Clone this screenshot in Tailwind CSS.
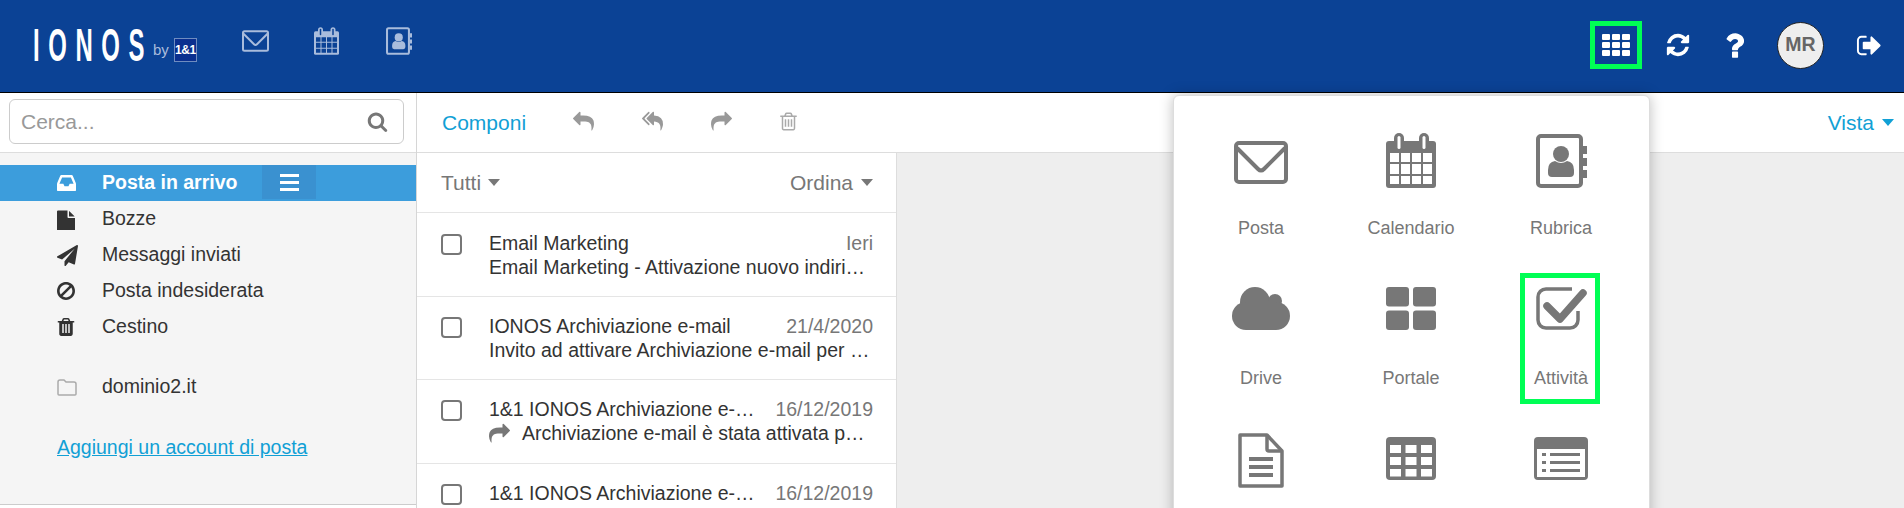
<!DOCTYPE html>
<html lang="it">
<head>
    <meta charset="utf-8">
    <title>Webmail</title>
    <script src="https://cdn.jsdelivr.net/npm/@tailwindcss/browser@4"></script>
</head>
<body class="bg-white font-['Liberation_Sans',Arial,sans-serif] text-[#333] overflow-hidden">
    <!-- icone -->
    <svg class="hidden">
        <symbol id="fa-reply" viewBox="0 0 1792 1792"><path d="M1792 1120q0 166-127 451-3 7-10.5 24t-13.5 30-13 22q-12 17-28 17-15 0-23.5-10t-8.5-25q0-9 2.5-26.5t2.5-23.5q5-68 5-123 0-101-17.5-181t-48.5-138.5-80-101-105.5-69.5-133-42.5-154-21.5-175.5-6h-224v256q0 26-19 45t-45 19-45-19l-512-512q-19-19-19-45t19-45l512-512q19-19 45-19t45 19 19 45v256h224q713 0 875 403 53 134 53 333z"/></symbol>
        <symbol id="fa-reply-all" viewBox="0 0 1792 1792"><path d="M640 1082v70q0 42-39 59-13 5-25 5-27 0-45-19l-512-512q-19-19-19-45t19-45l512-512q29-31 70-14 39 17 39 59v69l-397 398q-19 19-19 45t19 45zm1152 38q0 58-17 133.5t-38.5 138-48 125-40.5 90.5l-20 40q-8 17-28 17-6 0-9-1-25-8-23-34 43-400-106-565-64-71-170.5-110.5t-267.5-52.5v251q0 42-39 59-13 5-25 5-27 0-45-19l-512-512q-19-19-19-45t19-45l512-512q29-31 70-14 39 17 39 59v262q411 28 599 221 169 173 169 509z"/></symbol>
        <symbol id="fa-forward" viewBox="0 0 1792 1792"><g transform="translate(1792 0) scale(-1 1)"><path d="M1792 1120q0 166-127 451-3 7-10.5 24t-13.5 30-13 22q-12 17-28 17-15 0-23.5-10t-8.5-25q0-9 2.5-26.5t2.5-23.5q5-68 5-123 0-101-17.5-181t-48.5-138.5-80-101-105.5-69.5-133-42.5-154-21.5-175.5-6h-224v256q0 26-19 45t-45 19-45-19l-512-512q-19-19-19-45t19-45l512-512q19-19 45-19t45 19 19 45v256h224q713 0 875 403 53 134 53 333z"/></g></symbol>
        <symbol id="fa-trash-o" viewBox="0 0 1792 1792"><path d="M704 736v576q0 14-9 23t-23 9h-64q-14 0-23-9t-9-23v-576q0-14 9-23t23-9h64q14 0 23 9t9 23zm256 0v576q0 14-9 23t-23 9h-64q-14 0-23-9t-9-23v-576q0-14 9-23t23-9h64q14 0 23 9t9 23zm256 0v576q0 14-9 23t-23 9h-64q-14 0-23-9t-9-23v-576q0-14 9-23t23-9h64q14 0 23 9t9 23zm128 724v-948h-896v948q0 22 7 40.5t14.5 27 10.5 8.5h832q3 0 10.5-8.5t14.5-27 7-40.5zm-672-1076h448l-48-117q-7-9-17-11h-317q-10 2-17 11zm928 32v64q0 14-9 23t-23 9h-96v948q0 83-47 143.5t-113 60.5h-832q-66 0-113-58.5t-47-141.5v-952h-96q-14 0-23-9t-9-23v-64q0-14 9-23t23-9h309l70-167q15-37 54-63t79-26h320q40 0 79 26t54 63l70 167h309q14 0 23 9t9 23z"/></symbol>
        <symbol id="fa-trash" viewBox="128 128 1536 1536"><path d="M704 1376v-704q0-14-9-23t-23-9h-64q-14 0-23 9t-9 23v704q0 14 9 23t23 9h64q14 0 23-9t9-23zm256 0v-704q0-14-9-23t-23-9h-64q-14 0-23 9t-9 23v704q0 14 9 23t23 9h64q14 0 23-9t9-23zm256 0v-704q0-14-9-23t-23-9h-64q-14 0-23 9t-9 23v704q0 14 9 23t23 9h64q14 0 23-9t9-23zm-544-992h448l-48-117q-7-9-17-11h-317q-10 2-17 11zm928 32v64q0 14-9 23t-23 9h-96v948q0 83-47 143.5t-113 60.5h-832q-66 0-113-58.5t-47-141.5v-952h-96q-14 0-23-9t-9-23v-64q0-14 9-23t23-9h309l70-167q15-37 54-63t79-26h320q40 0 79 26t54 63l70 167h309q14 0 23 9t9 23z"/></symbol>
        <symbol id="fa-refresh" viewBox="0 0 1792 1792"><path d="M1639 1056q0 5-1 7-64 268-268 434.5t-478 166.5q-146 0-282.5-55t-243.5-157l-129 129q-19 19-45 19t-45-19-19-45v-448q0-26 19-45t45-19h448q26 0 45 19t19 45-19 45l-137 137q71 66 161 102t187 36q134 0 250-65t186-179q11-17 53-117 8-23 30-23h192q13 0 22.5 9.5t9.5 22.5zm25-800v448q0 26-19 45t-45 19h-448q-26 0-45-19t-19-45 19-45l138-138q-148-137-349-137-134 0-250 65t-186 179q-11 17-53 117-8 23-30 23h-199q-13 0-22.5-9.5t-9.5-22.5v-7q65-268 270-434.5t480-166.5q146 0 284 55.5t245 156.5l130-129q19-19 45-19t45 19 19 45z"/></symbol>
        <symbol id="fa-question" viewBox="400 256 1000 1280"><path d="M1088 1256v240q0 16-12 28t-28 12h-240q-16 0-28-12t-12-28v-240q0-16 12-28t28-12h240q16 0 28 12t12 28zm316-600q0 54-15.5 101t-35 76.5-55 59.5-57.5 43.5-61 35.5q-41 23-68.5 65t-27.5 67q0 17-12 32.5t-28 15.5h-240q-15 0-25.5-18.5t-10.5-37.5v-45q0-83 65-156.5t143-108.5q59-27 84-56t25-76q0-42-46.5-74t-107.5-32q-65 0-108 29-35 25-107 115-13 16-31 16-12 0-25-8l-164-125q-13-10-15.5-25t5.5-28q160-266 464-266 80 0 161 31t146 83 106 127.5 41 158.5z"/></symbol>
        <symbol id="fa-sign-out" viewBox="0 0 1792 1792"><path d="M704 1440q0 4 1 20t.5 26.5-3 23.5-10 19.5-20.5 6.5h-320q-119 0-203.5-84.5t-84.5-203.5v-704q0-119 84.5-203.5t203.5-84.5h320q13 0 22.5 9.5t9.5 22.5q0 4 1 20t.5 26.5-3 23.5-10 19.5-20.5 6.5h-320q-66 0-113 47t-47 113v704q0 66 47 113t113 47h312l11.5 1 11.5 3 8 5.5 7 9 2 13.5zm928-544q0 26-19 45l-544 544q-19 19-45 19t-45-19-19-45v-288h-448q-26 0-45-19t-19-45v-384q0-26 19-45t45-19h448v-288q0-26 19-45t45-19 45 19l544 544q19 19 19 45z"/></symbol>
        <symbol id="fa-search" viewBox="0 0 1792 1792"><path d="M1216 832q0-185-131.5-316.5t-316.5-131.5-316.5 131.5-131.5 316.5 131.5 316.5 316.5 131.5 316.5-131.5 131.5-316.5zm512 832q0 52-38 90t-90 38q-54 0-90-38l-343-342q-179 124-399 124-143 0-273.5-55.5t-225-150-150-225-55.5-273.5 55.5-273.5 150-225 225-150 273.5-55.5 273.5 55.5 225 150 150 225 55.5 273.5q0 220-124 399l343 343q37 37 37 90z"/></symbol>
        <symbol id="fa-inbox" viewBox="0 256 1536 1280"><path d="M1023 960h316q-1-3-2.5-8.5t-2.5-7.5l-212-496h-708l-212 496q-1 3-2.5 8.5t-2.5 7.5h316l95 192h320zm513 30v482q0 26-19 45t-45 19h-1408q-26 0-45-19t-19-45v-482q0-62 25-123l238-552q10-25 36.5-42t52.5-17h832q26 0 52.5 17t36.5 42l238 552q25 61 25 123z"/></symbol>
        <symbol id="fa-file" viewBox="128 128 1536 1536"><path d="M1152 512v-472q22 14 36 28l408 408q14 14 28 36h-472zm-128 32q0 40 28 68t68 28h544v1056q0 40-28 68t-68 28h-1344q-40 0-68-28t-28-68v-1600q0-40 28-68t68-28h800v544z" transform="translate(0 128)"/></symbol>
        <symbol id="fa-send" viewBox="0 0 1792 1792"><path d="M1764 11q33 24 27 64l-256 1536q-5 29-32 45-14 8-31 8-11 0-24-5l-453-185-242 295q-18 23-49 23-13 0-22-4-19-7-30.5-23.5t-11.5-36.5v-349l864-1059-1069 925-395-162q-37-14-40-55-2-40 32-59l1664-960q15-9 32-9 20 0 36 11z"/></symbol>
        <symbol id="fa-ban" viewBox="128 128 1536 1536"><path d="M1440 893q0-161-87-295l-754 753q137 89 297 89 111 0 211.5-43.5t173.5-116.5 116-174.5 43-212.5zm-999 299l755-754q-135-91-300-91-148 0-273 73t-198 199-73 274q0 162 89 299zm1223-299q0 157-61 300t-163.5 246-245 164-298.5 61-298.5-61-245-164-163.5-246-61-300 61-299.5 163.5-245.5 245-164 298.5-61 298.5 61 245 164 163.5 245.5 61 299.5z"/></symbol>

        <symbol id="app-mail" viewBox="0 0 54 43"><rect x="2" y="2" width="50" height="39" rx="3" fill="none" stroke="currentColor" stroke-width="4"/><path d="M3 7 L24 28 Q27 31 30 28 L51 7" fill="none" stroke="currentColor" stroke-width="4"/></symbol>
        <symbol id="app-calendar" viewBox="0 0 50 55"><rect y="8" width="50" height="47" rx="3" fill="currentColor"/><rect x="8" width="10" height="16" rx="5" fill="currentColor"/><rect x="33" width="10" height="16" rx="5" fill="currentColor"/><rect x="11.5" y="3" width="3" height="13" rx="1.5" fill="#fff"/><rect x="36.5" y="3" width="3" height="13" rx="1.5" fill="#fff"/><path fill="#fff" d="M4 20h9v9H4zM15 20h9v9h-9zM26 20h9v9h-9zM37 20h9v9h-9zM4 31h9v10H4zM15 31h9v10h-9zM26 31h9v10h-9zM37 31h9v10h-9zM4 43h9v8H4zM15 43h9v8h-9zM26 43h9v8h-9zM37 43h9v8h-9z"/></symbol>
        <symbol id="app-calendar-top" viewBox="0 0 50 55"><rect y="8" width="50" height="47" rx="3" fill="currentColor"/><rect x="8" width="10" height="16" rx="5" fill="currentColor"/><rect x="33" width="10" height="16" rx="5" fill="currentColor"/><rect x="11.5" y="3" width="3" height="13" rx="1.5" fill="#0b4295"/><rect x="36.5" y="3" width="3" height="13" rx="1.5" fill="#0b4295"/><path fill="#0b4295" d="M4 20h9v9H4zM15 20h9v9h-9zM26 20h9v9h-9zM37 20h9v9h-9zM4 31h9v10H4zM15 31h9v10h-9zM26 31h9v10h-9zM37 31h9v10h-9zM4 43h9v8H4zM15 43h9v8h-9zM26 43h9v8h-9zM37 43h9v8h-9z"/></symbol>
        <symbol id="app-contacts" viewBox="0 0 51 54"><rect x="2" y="2" width="43" height="50" rx="3" fill="none" stroke="currentColor" stroke-width="4"/><path fill="currentColor" d="M47 12h4v8h-4zM47 24h4v8h-4zM47 36h4v8h-4z"/><circle cx="25" cy="20" r="8" fill="currentColor"/><path fill="currentColor" d="M19 27 Q25 31 31 27 Q38 28 38 36 V39 Q38 43 34 43 H16 Q12 43 12 39 V36 Q12 28 19 27z"/></symbol>
        <symbol id="app-cloud" viewBox="0 0 58 43"><g fill="currentColor"><circle cx="23" cy="15" r="15"/><circle cx="43" cy="14" r="7"/><circle cx="14" cy="29" r="14"/><circle cx="44" cy="29" r="14"/><rect x="14" y="15" width="30" height="28"/></g></symbol>
        <symbol id="app-portal" viewBox="0 0 50 43"><g fill="currentColor"><rect width="23" height="19.5" rx="3"/><rect x="27" width="23" height="19.5" rx="3"/><rect y="23.5" width="23" height="19.5" rx="3"/><rect x="27" y="23.5" width="23" height="19.5" rx="3"/></g></symbol>
        <symbol id="app-tasks" viewBox="0 0 51 43"><path d="M36 2H10a8 8 0 0 0-8 8V33a8 8 0 0 0 8 8H34a8 8 0 0 0 8-8V24" fill="none" stroke="currentColor" stroke-width="3.5"/><path d="M11 19 L24 32 L47 6" fill="none" stroke="currentColor" stroke-width="7.5" stroke-linejoin="round" stroke-linecap="round"/></symbol>
        <symbol id="app-doc" viewBox="0 0 46 55"><path d="M2 2H29L44 18V53H2Z" fill="none" stroke="currentColor" stroke-width="3.5" stroke-linejoin="round"/><path d="M29 2V16Q29 18 31 18H44" fill="none" stroke="currentColor" stroke-width="3.5"/><path fill="currentColor" d="M11 24h24v4H11zM11 32h24v4H11zM11 40h24v4H11z"/></symbol>
        <symbol id="app-table" viewBox="0 0 50 43"><rect width="50" height="43" rx="4" fill="currentColor"/><path fill="#fff" d="M4 8h11v8H4zM19.500 8h11v8h-11zM35 8h11v8H35zM4 20h11v8H4zM19.500 20h11v8h-11zM35 20h11v8H35zM4 32h11v7.500H4zM19.500 32h11v7.500h-11zM35 32h11v7.500H35z"/></symbol>
        <symbol id="app-form" viewBox="0 0 54 43"><rect width="54" height="43" rx="4" fill="currentColor"/><path fill="#fff" d="M3 12h48v28H3z"/><path fill="currentColor" d="M8 16h4v3H8zM16 16h30v3H16zM8 24h4v3H8zM16 24h30v3H16zM8 32h4v3H8zM16 32h30v3H16z"/></symbol>
    </svg>

    <div class="relative w-[1904px] h-[508px] flex flex-col overflow-hidden">
        <!-- barra superiore -->
        <header class="h-[93px] shrink-0 bg-[#0b4295] border-b border-black flex items-center">
            <div class="w-[33px]"></div>
            <div class="w-[130px] h-[92px] flex items-center overflow-visible">
                <span class="block origin-left scale-x-[0.52] text-white text-[46px] font-bold leading-none tracking-[16.5px] -mt-[3px] whitespace-nowrap">IONOS</span>
            </div>
            <span class="ml-[-10px] mt-[8px] text-[#a9bcdc] text-[15px]">by</span>
            <span class="ml-[5px] mt-[7px] w-[23px] h-[24px] bg-[#0a2f8f] border border-[#6f8cc0] text-white text-[12px] font-bold tracking-[-0.5px] flex items-center justify-center">1&amp;1</span>
            <div class="ml-[45px] flex items-center text-[#a9bcdc] -mt-[10px]">
                <svg class="w-[27px] h-[22px]"><use href="#app-mail"/></svg>
                <svg class="ml-[45px] w-[25px] h-[28px]"><use href="#app-calendar-top"/></svg>
                <svg class="ml-[47px] w-[26px] h-[28px]"><use href="#app-contacts"/></svg>
            </div>
            <div class="ml-auto flex items-center text-white -mt-[2px]">
                <div class="w-[28px] grid grid-cols-3 gap-[2px]">
                    <span class="h-[6px] bg-white rounded-[1px]"></span><span class="h-[6px] bg-white rounded-[1px]"></span><span class="h-[6px] bg-white rounded-[1px]"></span>
                    <span class="h-[6px] bg-white rounded-[1px]"></span><span class="h-[6px] bg-white rounded-[1px]"></span><span class="h-[6px] bg-white rounded-[1px]"></span>
                    <span class="h-[6px] bg-white rounded-[1px]"></span><span class="h-[6px] bg-white rounded-[1px]"></span><span class="h-[6px] bg-white rounded-[1px]"></span>
                </div>
                <svg class="ml-[35px] w-[26px] h-[26px] fill-current"><use href="#fa-refresh"/></svg>
                <svg class="ml-[34px] w-[19px] h-[25px] fill-current"><use href="#fa-question"/></svg>
                <span class="ml-[33px] w-[47px] h-[47px] rounded-full bg-[#eee] border border-[#222] text-[#666] text-[19.5px] font-bold flex items-center justify-center">MR</span>
                <svg class="ml-[32px] mr-[21px] w-[27px] h-[27px] fill-current"><use href="#fa-sign-out"/></svg>
            </div>
        </header>

        <div class="flex flex-1 min-h-0">
            <!-- colonna cartelle -->
            <aside class="w-[417px] shrink-0 border-r border-[#d6d6d6] flex flex-col">
                <div class="h-[60px] shrink-0 border-b border-[#ddd] pl-[9px] pt-[6px] bg-white">
                    <div class="w-[395px] h-[45px] border border-[#ccc] rounded-md flex items-center pl-[11px] pr-[15px]">
                        <input class="flex-1 min-w-0 text-[21px] outline-none placeholder:text-[#999]" placeholder="Cerca...">
                        <svg class="w-[21px] h-[21px] fill-[#777]"><use href="#fa-search"/></svg>
                    </div>
                </div>
                <nav class="flex-1 bg-[#f5f5f5] border-b border-[#ccc] mb-[3px] pt-[12px] text-[19.5px]">
                    <div class="h-[36px] bg-[#3c9ddc] text-white font-bold flex items-center pl-[57px]">
                        <svg class="w-[19px] h-[16px] fill-white shrink-0"><use href="#fa-inbox"/></svg>
                        <span class="ml-[26px] w-[160px] whitespace-nowrap">Posta in arrivo</span>
                        <span class="h-[34px] -mt-[2px] w-[54px] bg-[#3a91d0] flex flex-col justify-center items-center gap-[4px]">
                            <i class="block w-[19px] h-[3px] bg-white"></i><i class="block w-[19px] h-[3px] bg-white"></i><i class="block w-[19px] h-[3px] bg-white"></i>
                        </span>
                    </div>
                    <div class="h-[36px] flex items-center pl-[57px]"><svg class="w-[18px] h-[21px] fill-[#333] shrink-0"><use href="#fa-file"/></svg><span class="ml-[27px]">Bozze</span></div>
                    <div class="h-[36px] flex items-center pl-[57px]"><svg class="w-[21px] h-[21px] fill-[#333] shrink-0"><use href="#fa-send"/></svg><span class="ml-[24px]">Messaggi inviati</span></div>
                    <div class="h-[36px] flex items-center pl-[57px]"><svg class="w-[18px] h-[18px] fill-[#333] shrink-0"><use href="#fa-ban"/></svg><span class="ml-[27px]">Posta indesiderata</span></div>
                    <div class="h-[36px] flex items-center pl-[57px]"><svg class="w-[18px] h-[20px] fill-[#333] shrink-0"><use href="#fa-trash"/></svg><span class="ml-[27px]">Cestino</span></div>
                    <div class="h-[36px] mt-[24px] flex items-center pl-[57px]">
                        <svg class="w-[20px] h-[17px] shrink-0" viewBox="0 0 20 17"><path d="M1 15V3Q1 1 3 1H7L9 3H17Q19 3 19 5V15Q19 16 18 16H2Q1 16 1 15Z" fill="none" stroke="#aaa" stroke-width="1.500"/></svg>
                        <span class="ml-[25px]">dominio2.it</span>
                    </div>
                    <a class="block mt-[28px] ml-[57px] text-[#11a0d5] underline">Aggiungi un account di posta</a>
                </nav>
            </aside>

            <main class="flex-1 min-w-0 flex flex-col">
                <!-- barra azioni -->
                <div class="h-[60px] shrink-0 border-b border-[#ddd] flex items-center pl-[25px] pr-[10px] text-[#11a0d5] text-[21px]">
                    <span class="w-[131px]">Componi</span>
                    <svg class="-mt-[2px] w-[21px] h-[21px] fill-[#999]"><use href="#fa-reply"/></svg>
                    <svg class="-mt-[2px] ml-[48px] w-[21px] h-[21px] fill-[#999]"><use href="#fa-reply-all"/></svg>
                    <svg class="-mt-[2px] ml-[48px] w-[21px] h-[21px] fill-[#999]"><use href="#fa-forward"/></svg>
                    <svg class="-mt-[2px] ml-[46px] w-[21px] h-[21px] fill-[#aaa]"><use href="#fa-trash-o"/></svg>
                    <span class="ml-auto">Vista</span>
                    <span class="ml-[8px] w-0 h-0 border-x-[6.500px] border-x-transparent border-t-[7px] border-t-[#11a0d5]"></span>
                </div>

                <div class="flex flex-1 min-h-0">
                    <!-- lista messaggi -->
                    <section class="w-[480px] shrink-0 bg-white border-r border-[#ddd] text-[19.5px]">
                        <div class="h-[60px] border-b border-[#e5e5e5] flex items-center pl-[24px] pr-[23px] text-[#777] text-[21px]">
                            <span>Tutti</span>
                            <span class="ml-[7px] w-0 h-0 border-x-[6.500px] border-x-transparent border-t-[7px] border-t-[#777]"></span>
                            <span class="ml-auto">Ordina</span>
                            <span class="ml-[8px] w-0 h-0 border-x-[6.500px] border-x-transparent border-t-[7px] border-t-[#777]"></span>
                        </div>
                        <article class="h-[84px] border-b border-[#e5e5e5] flex pl-[24px] pr-[23px] pt-[18px]">
                            <span class="shrink-0 w-[21px] h-[21px] mt-[3px] border-2 border-[#777] rounded-[4px]"></span>
                            <div class="ml-[27px] min-w-0 flex-1 leading-[24px] whitespace-nowrap">
                                <div class="flex justify-between"><span>Email Marketing</span><span class="text-[#777]">Ieri</span></div>
                                <div>Email Marketing - Attivazione nuovo indiri…</div>
                            </div>
                        </article>
                        <article class="h-[83px] border-b border-[#e5e5e5] flex pl-[24px] pr-[23px] pt-[17px]">
                            <span class="shrink-0 w-[21px] h-[21px] mt-[3px] border-2 border-[#777] rounded-[4px]"></span>
                            <div class="ml-[27px] min-w-0 flex-1 leading-[24px] whitespace-nowrap">
                                <div class="flex justify-between"><span>IONOS Archiviazione e-mail</span><span class="text-[#777]">21/4/2020</span></div>
                                <div>Invito ad attivare Archiviazione e-mail per …</div>
                            </div>
                        </article>
                        <article class="h-[84px] border-b border-[#e5e5e5] flex pl-[24px] pr-[23px] pt-[17px]">
                            <span class="shrink-0 w-[21px] h-[21px] mt-[3px] border-2 border-[#777] rounded-[4px]"></span>
                            <div class="ml-[27px] min-w-0 flex-1 leading-[24px] whitespace-nowrap">
                                <div class="flex justify-between"><span>1&amp;1 IONOS Archiviazione e-…</span><span class="text-[#777]">16/12/2019</span></div>
                                <div class="flex items-center"><svg class="shrink-0 w-[21px] h-[21px] fill-[#777] mr-[12px]"><use href="#fa-forward"/></svg><span>Archiviazione e-mail è stata attivata p…</span></div>
                            </div>
                        </article>
                        <article class="h-[84px] flex pl-[24px] pr-[23px] pt-[17px]">
                            <span class="shrink-0 w-[21px] h-[21px] mt-[3px] border-2 border-[#777] rounded-[4px]"></span>
                            <div class="ml-[27px] min-w-0 flex-1 leading-[24px] whitespace-nowrap">
                                <div class="flex justify-between"><span>1&amp;1 IONOS Archiviazione e-…</span><span class="text-[#777]">16/12/2019</span></div>
                            </div>
                        </article>
                    </section>
                    <div class="flex-1 bg-[#eee]"></div>
                </div>
            </main>
        </div>

        <!-- menu applicazioni -->
        <div class="absolute left-[1173px] top-[95px] w-[477px] h-[440px] bg-white border border-[#ddd] rounded-md shadow-[0_0_14px_rgba(0,0,0,0.25)] grid grid-cols-[150px_150px_150px] auto-rows-[150px] pl-[12px] pt-[24px] text-[#777] text-[18px] text-center">
            <div class="flex flex-col items-center"><div class="h-[80px] flex items-end pb-[16px]"><svg class="w-[54px] h-[43px]"><use href="#app-mail"/></svg></div><span class="mt-[15px]">Posta</span></div>
            <div class="flex flex-col items-center"><div class="h-[80px] flex items-end pb-[12px]"><svg class="w-[50px] h-[55px]"><use href="#app-calendar"/></svg></div><span class="mt-[15px]">Calendario</span></div>
            <div class="flex flex-col items-center"><div class="h-[80px] flex items-end pb-[12px]"><svg class="w-[51px] h-[54px]"><use href="#app-contacts"/></svg></div><span class="mt-[15px]">Rubrica</span></div>
            <div class="flex flex-col items-center"><div class="h-[80px] flex items-end pb-[20px]"><svg class="w-[58px] h-[43px]"><use href="#app-cloud"/></svg></div><span class="mt-[15px]">Drive</span></div>
            <div class="flex flex-col items-center"><div class="h-[80px] flex items-end pb-[20px]"><svg class="w-[50px] h-[43px]"><use href="#app-portal"/></svg></div><span class="mt-[15px]">Portale</span></div>
            <div class="flex flex-col items-center"><div class="h-[80px] flex items-end pb-[20px]"><svg class="w-[51px] h-[43px]"><use href="#app-tasks"/></svg></div><span class="mt-[15px]">Attività</span></div>
            <div class="flex flex-col items-center"><div class="h-[80px] flex items-end pb-[12px]"><svg class="w-[46px] h-[55px]"><use href="#app-doc"/></svg></div></div>
            <div class="flex flex-col items-center"><div class="h-[80px] flex items-end pb-[20px]"><svg class="w-[50px] h-[43px]"><use href="#app-table"/></svg></div></div>
            <div class="flex flex-col items-center"><div class="h-[80px] flex items-end pb-[20px]"><svg class="w-[54px] h-[43px]"><use href="#app-form"/></svg></div></div>
        </div>

        <!-- riquadri verdi di evidenziazione -->
        <div class="absolute left-[1590px] top-[21px] w-[52px] h-[48px] border-[5px] border-[#00ff55]"></div>
        <div class="absolute left-[1520px] top-[273px] w-[80px] h-[131px] border-[5px] border-[#00ff55]"></div>
    </div>
</body>
</html>
